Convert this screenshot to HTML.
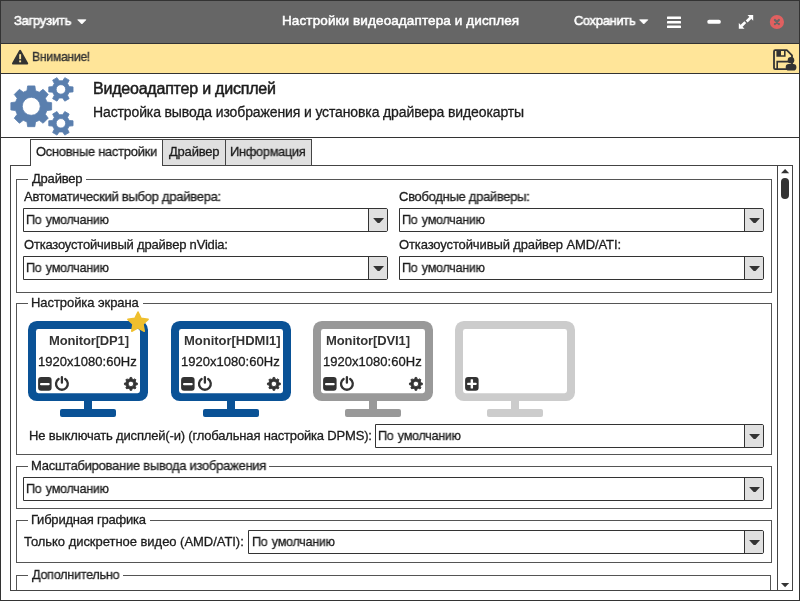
<!DOCTYPE html>
<html lang="ru"><head><meta charset="utf-8"><title>Настройки видеоадаптера и дисплея</title>
<style>
html,body{margin:0;padding:0}
body{width:800px;height:601px;position:relative;overflow:hidden;background:#fff;font-family:"Liberation Sans","DejaVu Sans",sans-serif;}
.a{position:absolute;box-sizing:border-box}
.t{will-change:transform;transform-origin:0 0;position:absolute;white-space:pre;line-height:1;font-family:"Liberation Sans","DejaVu Sans",sans-serif}
.ln{position:absolute;background:#333}
.titlebar{left:0;top:0;width:800px;height:44px;background:#666;border-bottom:1px solid #333}
.warn{left:0;top:44px;width:800px;height:30px;background:#ffe599;border-bottom:1px solid #333}
.tab{top:139px;height:27px;border:1px solid #444;background:#e0e0e0}
.tab.act{background:#fff;border-bottom:none}
.panel{left:10px;top:165px;width:783px;height:426px;border:1px solid #444}
.fs{border:1px solid #555}
.lgbg{background:#fff;height:3px}
.combo{height:24px;border:1px solid #333;border-radius:0 2px 2px 0;background:#fff}
.combo i{position:absolute;right:0;top:0;bottom:0;width:18px;background:#e0e0e0;border-left:1px solid #333;border-radius:0 1px 1px 0}
.combo i:after{content:"";position:absolute;left:4.3px;top:8.7px;width:10.6px;height:5.8px;background:#333;clip-path:polygon(0 8%,4% 0,96% 0,100% 8%,54% 100%,46% 100%)}
svg{position:absolute;overflow:visible}

</style></head><body>
<div class="a titlebar"></div>
<div class="a warn"></div>
<!-- window border -->
<div class="ln" style="left:0;top:0;width:1px;height:601px"></div>
<div class="ln" style="left:799px;top:0;width:1px;height:601px"></div>
<div class="ln" style="left:0;top:0;width:800px;height:1px"></div>
<div class="ln" style="left:0;top:600px;width:800px;height:1px"></div>
<!-- header bottom line -->
<div class="ln" style="left:0;top:137px;width:800px;height:1px"></div>

<!-- title bar icons -->
<svg style="left:0;top:0" width="800" height="74" viewBox="0 0 800 74">
  <path d="M77.7 19.8h8.2l-4.1 4.2z" fill="#fff" stroke="#fff" stroke-width="0.8" stroke-linejoin="round"/>
  <path d="M639.6 19.8h8.2l-4.1 4.2z" fill="#fff" stroke="#fff" stroke-width="0.8" stroke-linejoin="round"/>
  <!-- hamburger -->
  <rect x="667" y="16.5" width="14" height="2.6" rx="0.6" fill="#fff"/>
  <rect x="667" y="21" width="14" height="2.6" rx="0.6" fill="#fff"/>
  <rect x="667" y="25.5" width="14" height="2.6" rx="0.6" fill="#fff"/>
  <!-- minimize -->
  <rect x="707.3" y="19.65" width="13.5" height="4.2" rx="1.9" fill="#fff"/>
  <!-- expand -->
  <g fill="#fff" stroke="none">
    <path d="M747.5 15h5.7v5.7z"/>
    <path d="M744.5 28.7h-5.7v-5.7z"/>
    <path d="M741.4 26L745.3 22.1M746.7 21.5L750.5 17.7" stroke="#fff" stroke-width="2.7"/>
  </g>
  <!-- close -->
  <circle cx="776.9" cy="22" r="7.1" fill="#e06060"/>
  <path d="M774.9 20l4 4M778.9 20l-4 4" stroke="#666" stroke-width="2.2" stroke-linecap="round"/>
  <!-- warning triangle -->
  <path d="M20.1 50.8L13 63.6h14.2z" fill="#333" stroke="#333" stroke-width="2" stroke-linejoin="round"/>
  <rect x="19.2" y="54.2" width="1.9" height="5" fill="#ffe599"/>
  <rect x="19.2" y="60.4" width="1.9" height="1.9" fill="#ffe599"/>
  <!-- save icon -->
  <g>
    <path d="M775.2 50.2h11.6l5.2 5.2v12.6a1.2 1.2 0 0 1-1.2 1.2h-15.6a1.2 1.2 0 0 1-1.2-1.2v-16.6a1.2 1.2 0 0 1 1.2-1.2z" fill="#ffe599" stroke="#333" stroke-width="1.8" stroke-linejoin="round"/>
    <path d="M777.2 50.2v5.8h7.6v-5.8" fill="none" stroke="#333" stroke-width="1.6"/>
    <rect x="777.2" y="50.2" width="3.8" height="5.8" fill="#333"/>
    <path d="M777.2 69.2v-7.6h12" fill="none" stroke="#333" stroke-width="1.6"/>
    <circle cx="791" cy="60.3" r="3.3" fill="#333"/>
    <rect x="785.7" y="63.9" width="10.7" height="6.7" rx="3.1" fill="#333"/>
  </g>
</svg>

<!-- gears placeholder -->
<svg id="gears" style="left:0;top:74px" width="90" height="63" viewBox="0 74 90 63">
<path d="M46.88 102.03L51.63 102.66L51.63 109.94L46.88 110.57L45.32 114.33L48.23 118.14L43.09 123.28L39.28 120.37L35.52 121.93L34.89 126.68L27.61 126.68L26.98 121.93L23.22 120.37L19.41 123.28L14.27 118.14L17.18 114.33L15.62 110.57L10.87 109.94L10.87 102.66L15.62 102.03L17.18 98.27L14.27 94.46L19.41 89.32L23.22 92.23L26.98 90.67L27.61 85.92L34.89 85.92L35.52 90.67L39.28 92.23L43.09 89.32L48.23 94.46L45.32 98.27ZM22.25 106.30a9.00 9.00 0 1 0 18.00 0a9.00 9.00 0 1 0 -18.00 0Z" fill="#5a7fae" fill-rule="evenodd" stroke="#5a7fae" stroke-width="0.8" stroke-linejoin="round"/><path d="M69.24 86.59L73.04 86.89L73.04 91.91L69.24 92.21L67.50 95.22L69.15 98.66L64.79 101.17L62.64 98.03L59.16 98.03L57.01 101.17L52.65 98.66L54.30 95.22L52.56 92.21L48.76 91.91L48.76 86.89L52.56 86.59L54.30 83.58L52.65 80.14L57.01 77.63L59.16 80.77L62.64 80.77L64.79 77.63L69.15 80.14L67.50 83.58ZM56.15 89.40a4.75 4.75 0 1 0 9.50 0a4.75 4.75 0 1 0 -9.50 0Z" fill="#5a7fae" fill-rule="evenodd" stroke="#5a7fae" stroke-width="0.8" stroke-linejoin="round"/><path d="M69.24 120.49L73.04 120.79L73.04 125.81L69.24 126.11L67.50 129.12L69.15 132.56L64.79 135.07L62.64 131.93L59.16 131.93L57.01 135.07L52.65 132.56L54.30 129.12L52.56 126.11L48.76 125.81L48.76 120.79L52.56 120.49L54.30 117.48L52.65 114.04L57.01 111.53L59.16 114.67L62.64 114.67L64.79 111.53L69.15 114.04L67.50 117.48ZM56.15 123.30a4.75 4.75 0 1 0 9.50 0a4.75 4.75 0 1 0 -9.50 0Z" fill="#5a7fae" fill-rule="evenodd" stroke="#5a7fae" stroke-width="0.8" stroke-linejoin="round"/>
</svg>

<!-- tabs -->
<div class="a panel"></div>
<div class="a tab act" style="left:30px;width:133px"></div>
<div class="a tab" style="left:162px;width:64px;height:27px"></div>
<div class="a tab" style="left:225px;width:87px;height:27px"></div>
<div class="ln" style="left:31px;top:165px;width:131px;height:1px;background:#fff"></div>

<!-- scrollbar -->
<div class="ln" style="left:777px;top:166px;width:1px;height:424px;background:#444"></div>
<svg style="left:777px;top:165px" width="16" height="426" viewBox="777 165 16 426">
  <path d="M781 173.2h8.2l-4.1-4.2z" fill="#333"/>
  <rect x="781" y="177.9" width="8" height="21" rx="4" fill="#333"/>
  <path d="M781 583h8.2l-4.1 4.2z" fill="#333"/>
</svg>

<!-- fieldsets -->
<div class="a fs" style="left:16px;top:179px;width:756px;height:114px"></div>
<div class="a fs" style="left:16px;top:303px;width:756px;height:152px"></div>
<div class="a fs" style="left:16px;top:466px;width:756px;height:43px"></div>
<div class="a fs" style="left:16px;top:520px;width:756px;height:43px"></div>
<div class="a fs" style="left:16px;top:575px;width:755px;height:20px;border-bottom:none"></div>
<!-- mask bottom of last fieldset beyond panel -->
<div class="a" style="left:11px;top:591px;width:781px;height:9px;background:#fff"></div>
<div class="ln" style="left:10px;top:590px;width:783px;height:1px;background:#444"></div>
<!-- legend gaps -->
<div class="a lgbg" style="left:28px;top:178px;width:58px"></div>
<div class="a lgbg" style="left:28px;top:302px;width:115px"></div>
<div class="a lgbg" style="left:28px;top:465px;width:241px"></div>
<div class="a lgbg" style="left:28px;top:519px;width:122px"></div>
<div class="a lgbg" style="left:28px;top:574px;width:95px"></div>

<!-- combos -->
<div class="a combo" style="left:23px;top:208px;width:365px"><i></i></div>
<div class="a combo" style="left:399px;top:208px;width:365px"><i></i></div>
<div class="a combo" style="left:23px;top:256px;width:365px"><i></i></div>
<div class="a combo" style="left:399px;top:256px;width:365px"><i></i></div>
<div class="a combo" style="left:375px;top:424px;width:389px"><i></i></div>
<div class="a combo" style="left:23px;top:477px;width:741px"><i></i></div>
<div class="a combo" style="left:248px;top:530px;width:516px"><i></i></div>

<!-- monitors -->
<svg style="left:0;top:300px" width="600" height="125" viewBox="0 300 600 125"><g><rect x="28" y="321" width="120" height="80" rx="8.8" fill="#0a5296"/><rect x="36" y="329" width="104" height="64.2" rx="2.4" fill="#fff"/><rect x="84" y="399" width="8" height="12" fill="#0a5296"/><rect x="60" y="409" width="56" height="8" rx="2" fill="#0a5296"/><rect x="38.1" y="377" width="13.5" height="13.75" rx="3" fill="#333"/><rect x="40" y="382.9" width="9.7" height="2.4" rx="1.1" fill="#fff"/><path d="M65.20 378.96A5.9 5.9 0 1 1 58.60 378.96" fill="none" stroke="#333" stroke-width="2.3" stroke-linecap="round"/><path d="M61.90 377.05V382.7" fill="none" stroke="#333" stroke-width="2.3" stroke-linecap="round"/><path d="M136.02 382.99L137.35 383.06L137.35 384.74L136.02 384.81L135.17 386.87L136.05 387.86L134.86 389.05L133.87 388.17L131.81 389.02L131.74 390.35L130.06 390.35L129.99 389.02L127.93 388.17L126.94 389.05L125.75 387.86L126.63 386.87L125.78 384.81L124.45 384.74L124.45 383.06L125.78 382.99L126.63 380.93L125.75 379.94L126.94 378.75L127.93 379.63L129.99 378.78L130.06 377.45L131.74 377.45L131.81 378.78L133.87 379.63L134.86 378.75L136.05 379.94L135.17 380.93ZM128.15 383.90a2.75 2.75 0 1 0 5.50 0a2.75 2.75 0 1 0 -5.50 0Z" fill="#333" fill-rule="evenodd" stroke="#333" stroke-width="0.9" stroke-linejoin="round"/><path d="M138.00 312.00L141.06 318.39L148.08 319.32L142.95 324.21L144.23 331.18L138.00 327.80L131.77 331.18L133.05 324.21L127.92 319.32L134.94 318.39Z" fill="#efbf2e" stroke="#efbf2e" stroke-width="1.6" stroke-linejoin="round"/></g><g><rect x="171" y="321" width="120" height="80" rx="8.8" fill="#0a5296"/><rect x="179" y="329" width="104" height="64.2" rx="2.4" fill="#fff"/><rect x="227" y="399" width="8" height="12" fill="#0a5296"/><rect x="203" y="409" width="56" height="8" rx="2" fill="#0a5296"/><rect x="181.1" y="377" width="13.5" height="13.75" rx="3" fill="#333"/><rect x="183" y="382.9" width="9.7" height="2.4" rx="1.1" fill="#fff"/><path d="M208.20 378.96A5.9 5.9 0 1 1 201.60 378.96" fill="none" stroke="#333" stroke-width="2.3" stroke-linecap="round"/><path d="M204.90 377.05V382.7" fill="none" stroke="#333" stroke-width="2.3" stroke-linecap="round"/><path d="M279.02 382.99L280.35 383.06L280.35 384.74L279.02 384.81L278.17 386.87L279.05 387.86L277.86 389.05L276.87 388.17L274.81 389.02L274.74 390.35L273.06 390.35L272.99 389.02L270.93 388.17L269.94 389.05L268.75 387.86L269.63 386.87L268.78 384.81L267.45 384.74L267.45 383.06L268.78 382.99L269.63 380.93L268.75 379.94L269.94 378.75L270.93 379.63L272.99 378.78L273.06 377.45L274.74 377.45L274.81 378.78L276.87 379.63L277.86 378.75L279.05 379.94L278.17 380.93ZM271.15 383.90a2.75 2.75 0 1 0 5.50 0a2.75 2.75 0 1 0 -5.50 0Z" fill="#333" fill-rule="evenodd" stroke="#333" stroke-width="0.9" stroke-linejoin="round"/></g><g><rect x="313" y="321" width="120" height="80" rx="8.8" fill="#999"/><rect x="321" y="329" width="104" height="64.2" rx="2.4" fill="#fff"/><rect x="369" y="399" width="8" height="12" fill="#999"/><rect x="345" y="409" width="56" height="8" rx="2" fill="#999"/><rect x="323.1" y="377" width="13.5" height="13.75" rx="3" fill="#333"/><rect x="325" y="382.9" width="9.7" height="2.4" rx="1.1" fill="#fff"/><path d="M350.20 378.96A5.9 5.9 0 1 1 343.60 378.96" fill="none" stroke="#333" stroke-width="2.3" stroke-linecap="round"/><path d="M346.90 377.05V382.7" fill="none" stroke="#333" stroke-width="2.3" stroke-linecap="round"/><path d="M421.02 382.99L422.35 383.06L422.35 384.74L421.02 384.81L420.17 386.87L421.05 387.86L419.86 389.05L418.87 388.17L416.81 389.02L416.74 390.35L415.06 390.35L414.99 389.02L412.93 388.17L411.94 389.05L410.75 387.86L411.63 386.87L410.78 384.81L409.45 384.74L409.45 383.06L410.78 382.99L411.63 380.93L410.75 379.94L411.94 378.75L412.93 379.63L414.99 378.78L415.06 377.45L416.74 377.45L416.81 378.78L418.87 379.63L419.86 378.75L421.05 379.94L420.17 380.93ZM413.15 383.90a2.75 2.75 0 1 0 5.50 0a2.75 2.75 0 1 0 -5.50 0Z" fill="#333" fill-rule="evenodd" stroke="#333" stroke-width="0.9" stroke-linejoin="round"/></g><g><rect x="455" y="321" width="120" height="80" rx="8.8" fill="#ccc"/><rect x="463" y="329" width="104" height="64.2" rx="2.4" fill="#fff"/><rect x="511" y="399" width="8" height="12" fill="#ccc"/><rect x="487" y="409" width="56" height="8" rx="2" fill="#ccc"/><rect x="465.1" y="377" width="13.5" height="13.75" rx="3" fill="#333"/><rect x="467.2" y="382.7" width="9.3" height="2.4" rx="0.6" fill="#fff"/><rect x="470.65" y="379.25" width="2.4" height="9.3" rx="0.6" fill="#fff"/></g></svg>

<!-- texts -->
<span class="t" style="left:13.96px;top:14.16px;font-size:13.4px;font-weight:400;color:#fff;letter-spacing:-0.273px;transform:scaleX(0.9733);-webkit-text-stroke:0.55px">Загрузить</span>
<span class="t" style="left:282.25px;top:14.07px;font-size:13.5px;font-weight:400;color:#fff;letter-spacing:0.113px;-webkit-text-stroke:0.5px">Настройки видеоадаптера и дисплея</span>
<span class="t" style="left:573.52px;top:14.16px;font-size:13.4px;font-weight:400;color:#fff;letter-spacing:-0.300px;transform:scaleX(0.9597);-webkit-text-stroke:0.55px">Сохранить</span>
<span class="t" style="left:31.66px;top:50.10px;font-size:13px;font-weight:400;color:#333;letter-spacing:-0.292px;transform:scaleX(0.9374);-webkit-text-stroke:0.35px">Внимание!</span>
<span class="t" style="left:92.80px;top:81.26px;font-size:16px;font-weight:400;color:#1c1c1c;letter-spacing:-0.214px;-webkit-text-stroke:0.5px">Видеоадаптер и дисплей</span>
<span class="t" style="left:92.80px;top:104.95px;font-size:14px;font-weight:400;color:#1c1c1c;letter-spacing:-0.125px;-webkit-text-stroke:0.3px">Настройка вывода изображения и установка драйвера видеокарты</span>
<span class="t" style="left:36.11px;top:144.80px;font-size:13px;font-weight:400;color:#1c1c1c;letter-spacing:-0.261px;transform:scaleX(0.9896);-webkit-text-stroke:0.3px">Основные настройки</span>
<span class="t" style="left:168.60px;top:144.80px;font-size:13px;font-weight:400;color:#1c1c1c;letter-spacing:-0.208px;-webkit-text-stroke:0.3px">Драйвер</span>
<span class="t" style="left:230.01px;top:144.80px;font-size:13px;font-weight:400;color:#1c1c1c;letter-spacing:-0.306px;transform:scaleX(0.9868);-webkit-text-stroke:0.3px">Информация</span>
<span class="t" style="left:32.00px;top:171.50px;font-size:13px;font-weight:400;color:#1c1c1c;letter-spacing:-0.208px;-webkit-text-stroke:0.3px">Драйвер</span>
<span class="t" style="left:24.00px;top:189.60px;font-size:13px;font-weight:400;color:#1c1c1c;letter-spacing:-0.247px;transform:scaleX(0.9970);-webkit-text-stroke:0.3px">Автоматический выбор драйвера:</span>
<span class="t" style="left:399.10px;top:189.60px;font-size:13px;font-weight:400;color:#1c1c1c;letter-spacing:-0.263px;transform:scaleX(0.9953);-webkit-text-stroke:0.3px">Свободные драйверы:</span>
<span class="t" style="left:26.44px;top:212.60px;font-size:13px;font-weight:400;color:#1c1c1c;letter-spacing:-0.289px;word-spacing:1.3px;transform:scaleX(0.9649);-webkit-text-stroke:0.3px">По умолчанию</span>
<span class="t" style="left:402.44px;top:212.60px;font-size:13px;font-weight:400;color:#1c1c1c;letter-spacing:-0.289px;word-spacing:1.3px;transform:scaleX(0.9649);-webkit-text-stroke:0.3px">По умолчанию</span>
<span class="t" style="left:23.50px;top:237.60px;font-size:13px;font-weight:400;color:#1c1c1c;letter-spacing:-0.194px;-webkit-text-stroke:0.3px">Отказоустойчивый драйвер nVidia:</span>
<span class="t" style="left:399.10px;top:237.60px;font-size:13px;font-weight:400;color:#1c1c1c;letter-spacing:-0.120px;-webkit-text-stroke:0.3px">Отказоустойчивый драйвер AMD/ATI:</span>
<span class="t" style="left:26.44px;top:260.60px;font-size:13px;font-weight:400;color:#1c1c1c;letter-spacing:-0.289px;word-spacing:1.3px;transform:scaleX(0.9649);-webkit-text-stroke:0.3px">По умолчанию</span>
<span class="t" style="left:402.44px;top:260.60px;font-size:13px;font-weight:400;color:#1c1c1c;letter-spacing:-0.289px;word-spacing:1.3px;transform:scaleX(0.9649);-webkit-text-stroke:0.3px">По умолчанию</span>
<span class="t" style="left:31.00px;top:295.60px;font-size:13px;font-weight:400;color:#1c1c1c;letter-spacing:-0.067px;-webkit-text-stroke:0.3px">Настройка экрана</span>
<span class="t" style="left:48.85px;top:333.60px;font-size:13px;font-weight:700;color:#333;letter-spacing:-0.145px;-webkit-text-stroke:0px">Monitor[DP1]</span>
<span class="t" style="left:38.25px;top:354.60px;font-size:13px;font-weight:400;color:#1c1c1c;letter-spacing:0.031px;-webkit-text-stroke:0.3px">1920x1080:60Hz</span>
<span class="t" style="left:183.65px;top:333.60px;font-size:13px;font-weight:700;color:#333;letter-spacing:-0.019px;-webkit-text-stroke:0px">Monitor[HDMI1]</span>
<span class="t" style="left:181.25px;top:354.60px;font-size:13px;font-weight:400;color:#1c1c1c;letter-spacing:0.031px;-webkit-text-stroke:0.3px">1920x1080:60Hz</span>
<span class="t" style="left:326.25px;top:333.60px;font-size:13px;font-weight:700;color:#333;letter-spacing:-0.096px;-webkit-text-stroke:0px">Monitor[DVI1]</span>
<span class="t" style="left:323.25px;top:354.60px;font-size:13px;font-weight:400;color:#1c1c1c;letter-spacing:0.031px;-webkit-text-stroke:0.3px">1920x1080:60Hz</span>
<span class="t" style="left:28.50px;top:428.60px;font-size:13px;font-weight:400;color:#1c1c1c;letter-spacing:-0.178px;-webkit-text-stroke:0.3px">Не выключать дисплей(-и) (глобальная настройка DPMS):</span>
<span class="t" style="left:378.44px;top:428.60px;font-size:13px;font-weight:400;color:#1c1c1c;letter-spacing:-0.289px;word-spacing:1.3px;transform:scaleX(0.9649);-webkit-text-stroke:0.3px">По умолчанию</span>
<span class="t" style="left:30.50px;top:458.60px;font-size:13px;font-weight:400;color:#1c1c1c;letter-spacing:-0.258px;transform:scaleX(0.9969);-webkit-text-stroke:0.3px">Масштабирование вывода изображения</span>
<span class="t" style="left:26.44px;top:481.60px;font-size:13px;font-weight:400;color:#1c1c1c;letter-spacing:-0.289px;word-spacing:1.3px;transform:scaleX(0.9649);-webkit-text-stroke:0.3px">По умолчанию</span>
<span class="t" style="left:30.70px;top:512.70px;font-size:13px;font-weight:400;color:#1c1c1c;letter-spacing:-0.216px;-webkit-text-stroke:0.3px">Гибридная графика</span>
<span class="t" style="left:23.75px;top:534.60px;font-size:13px;font-weight:400;color:#1c1c1c;letter-spacing:-0.038px;-webkit-text-stroke:0.3px">Только дискретное видео (AMD/ATI):</span>
<span class="t" style="left:252.44px;top:534.60px;font-size:13px;font-weight:400;color:#1c1c1c;letter-spacing:-0.289px;word-spacing:1.3px;transform:scaleX(0.9649);-webkit-text-stroke:0.3px">По умолчанию</span>
<span class="t" style="left:31.70px;top:567.60px;font-size:13px;font-weight:400;color:#1c1c1c;letter-spacing:-0.280px;transform:scaleX(0.9712);-webkit-text-stroke:0.3px">Дополнительно</span>
</body></html>
